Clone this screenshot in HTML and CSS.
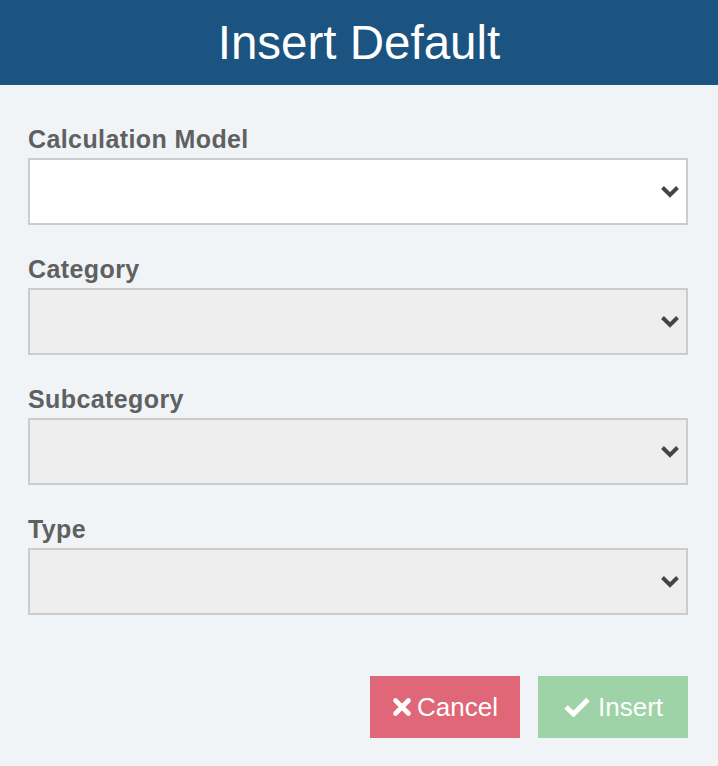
FILE: index.html
```html
<!DOCTYPE html>
<html>
<head>
<meta charset="utf-8">
<link rel="stylesheet" href="styles.css">
</head>
<body>
<div class="header"><h1 class="title">Insert Default</h1></div>
<div class="form">
  <div class="group">
    <label class="label">Calculation Model</label>
    <div class="select select-active">
      <svg class="chev" width="20" height="13" viewBox="0 0 20 13"><polyline points="2.5,2.5 10,10 17.5,2.5" fill="none" stroke="#454545" stroke-width="4"/></svg>
    </div>
  </div>
  <div class="group">
    <label class="label">Category</label>
    <div class="select">
      <svg class="chev" width="20" height="13" viewBox="0 0 20 13"><polyline points="2.5,2.5 10,10 17.5,2.5" fill="none" stroke="#454545" stroke-width="4"/></svg>
    </div>
  </div>
  <div class="group">
    <label class="label">Subcategory</label>
    <div class="select">
      <svg class="chev" width="20" height="13" viewBox="0 0 20 13"><polyline points="2.5,2.5 10,10 17.5,2.5" fill="none" stroke="#454545" stroke-width="4"/></svg>
    </div>
  </div>
  <div class="group">
    <label class="label">Type</label>
    <div class="select">
      <svg class="chev" width="20" height="13" viewBox="0 0 20 13"><polyline points="2.5,2.5 10,10 17.5,2.5" fill="none" stroke="#454545" stroke-width="4"/></svg>
    </div>
  </div>
  <div class="actions">
    <button class="btn btn-cancel">
      <svg class="icon" width="20" height="20" viewBox="0 0 20 20"><path d="M3.5 3.5 L16.5 16.5 M16.5 3.5 L3.5 16.5" stroke="#fff" stroke-width="4.6" stroke-linecap="round" fill="none"/></svg>
      <span>Cancel</span>
    </button>
    <button class="btn btn-insert">
      <svg class="icon" width="28" height="20" viewBox="0 0 28 20"><polyline points="3,10 10.5,17 25,2.5" fill="none" stroke="#fff" stroke-width="5" stroke-linejoin="miter"/></svg>
      <span>Insert</span>
    </button>
  </div>
</div>
</body>
</html>
```
FILE: styles.css
```css
html, body {
  margin: 0;
  padding: 0;
}
body {
  background: #f1f4f7;
  font-family: "Liberation Sans", Arial, sans-serif;
  width: 718px;
  height: 766px;
  overflow: hidden;
}
.header {
  height: 85px;
  background: #1b5381;
  display: flex;
  align-items: center;
  justify-content: center;
}
.title {
  margin: 0;
  color: #fff;
  font-weight: normal;
  font-size: 47.5px;
  line-height: 1;
}
.form {
  padding: 39px 30px 0 28px;
}
.group {
  display: flex;
  flex-direction: column;
  gap: 4px;
  margin-bottom: 29px;
}
.label {
  font-size: 25px;
  line-height: 30px;
  font-weight: bold;
  color: #606060;
  letter-spacing: 0.4px;
}
.select {
  height: 63px;
  border: 2px solid #cccccc;
  background: #eeeeee;
  display: flex;
  align-items: center;
  justify-content: flex-end;
  padding-right: 6px;
}
.select-active {
  background: #ffffff;
}
.chev {
  display: block;
}
.actions {
  display: flex;
  justify-content: flex-end;
  gap: 18px;
  margin-top: 61px;
}
.btn {
  width: 150px;
  height: 62px;
  border: none;
  border-radius: 0;
  color: #fff;
  font-family: "Liberation Sans", Arial, sans-serif;
  font-size: 26px;
  display: flex;
  align-items: center;
  justify-content: center;
  gap: 5px;
  padding: 0;
}
.btn-cancel {
  background: #e06778;
}
.btn-insert {
  background: #9dd3a6;
  gap: 7px;
}
.icon {
  display: block;
}
```
